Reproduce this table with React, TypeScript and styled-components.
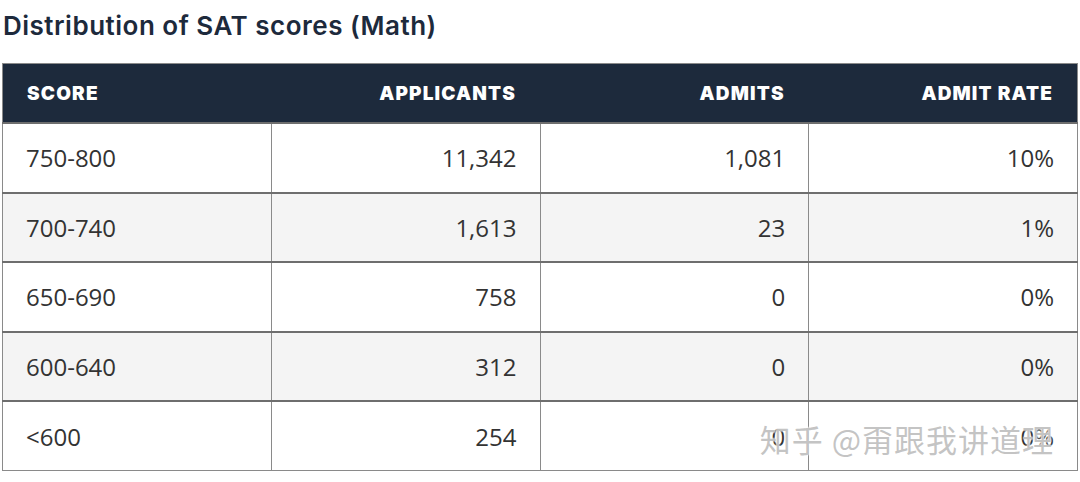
import React from 'react';
import styled, { createGlobalStyle } from 'styled-components';

const GlobalStyle = createGlobalStyle`
  html, body {
    margin: 0;
    padding: 0;
    background: #ffffff;
  }
`;

const rows = [
  { score: '750-800', applicants: '11,342', admits: '1,081', rate: '10%' },
  { score: '700-740', applicants: '1,613', admits: '23', rate: '1%' },
  { score: '650-690', applicants: '758', admits: '0', rate: '0%' },
  { score: '600-640', applicants: '312', admits: '0', rate: '0%' },
  { score: '<600', applicants: '254', admits: '0', rate: '0%' },
];

const App: React.FC = () => {
  return (
    <Page>
      <GlobalStyle />
      <Title>Distribution of SAT scores (Math)</Title>
      <TableWrap>
        <Table>
          <thead>
            <tr>
              <HeadCell>Score</HeadCell>
              <HeadCell $right>Applicants</HeadCell>
              <HeadCell $right>Admits</HeadCell>
              <HeadCell $right>Admit rate</HeadCell>
            </tr>
          </thead>
          <tbody>
            {rows.map((row, i) => (
              <Row key={row.score} $shaded={i % 2 === 1}>
                <Cell>{row.score}</Cell>
                <Cell $right>{row.applicants}</Cell>
                <Cell $right>{row.admits}</Cell>
                <Cell $right>{row.rate}</Cell>
              </Row>
            ))}
          </tbody>
        </Table>
        <Watermark>知乎 @甭跟我讲道理</Watermark>
      </TableWrap>
    </Page>
  );
};

export default App;

const Page = styled.div`
  padding: 10px 0 0 2px;
  width: 1076px;
`;

const Title = styled.h2`
  margin: 0 0 0 1px;
  font-family: Inter, 'Noto Sans', sans-serif;
  font-weight: 600;
  font-size: 26px;
  letter-spacing: 0.5px;
  line-height: 32px;
  color: #1d2a3c;
`;

const TableWrap = styled.div`
  position: relative;
  margin-top: 21px;
`;

const Table = styled.table`
  width: 1076px;
  border-collapse: collapse;
  table-layout: fixed;
  border: 1px solid #8a8a8a;
`;

const HeadCell = styled.th<{ $right?: boolean }>`
  height: 58px;
  padding: 0 24px;
  background: #1d2a3c;
  color: #ffffff;
  font-family: Inter, 'Noto Sans', sans-serif;
  font-weight: 900;
  font-size: 19px;
  letter-spacing: 1.15px;
  text-transform: uppercase;
  text-align: ${p => (p.$right ? 'right' : 'left')};
  vertical-align: middle;
`;

const Row = styled.tr<{ $shaded: boolean }>`
  background: ${p => (p.$shaded ? '#f4f4f4' : '#ffffff')};
  border-top: 2px solid #6e6e6e;
`;

const Cell = styled.td<{ $right?: boolean }>`
  height: 67.6px;
  padding: 0 23px;
  border-left: 1px solid #8a8a8a;
  font-family: 'Open Sans', 'Noto Sans', sans-serif;
  font-size: 24px;
  color: #333333;
  text-align: ${p => (p.$right ? 'right' : 'left')};
  vertical-align: middle;
`;

const Watermark = styled.div`
  position: absolute;
  right: 24px;
  bottom: 10px;
  font-family: 'Noto Sans CJK SC', sans-serif;
  font-size: 31px;
  letter-spacing: 1px;
  color: rgba(170, 170, 170, 0.7);
  text-shadow: 0 0 2px #fff, 0 0 2px #fff;
  pointer-events: none;
`;
